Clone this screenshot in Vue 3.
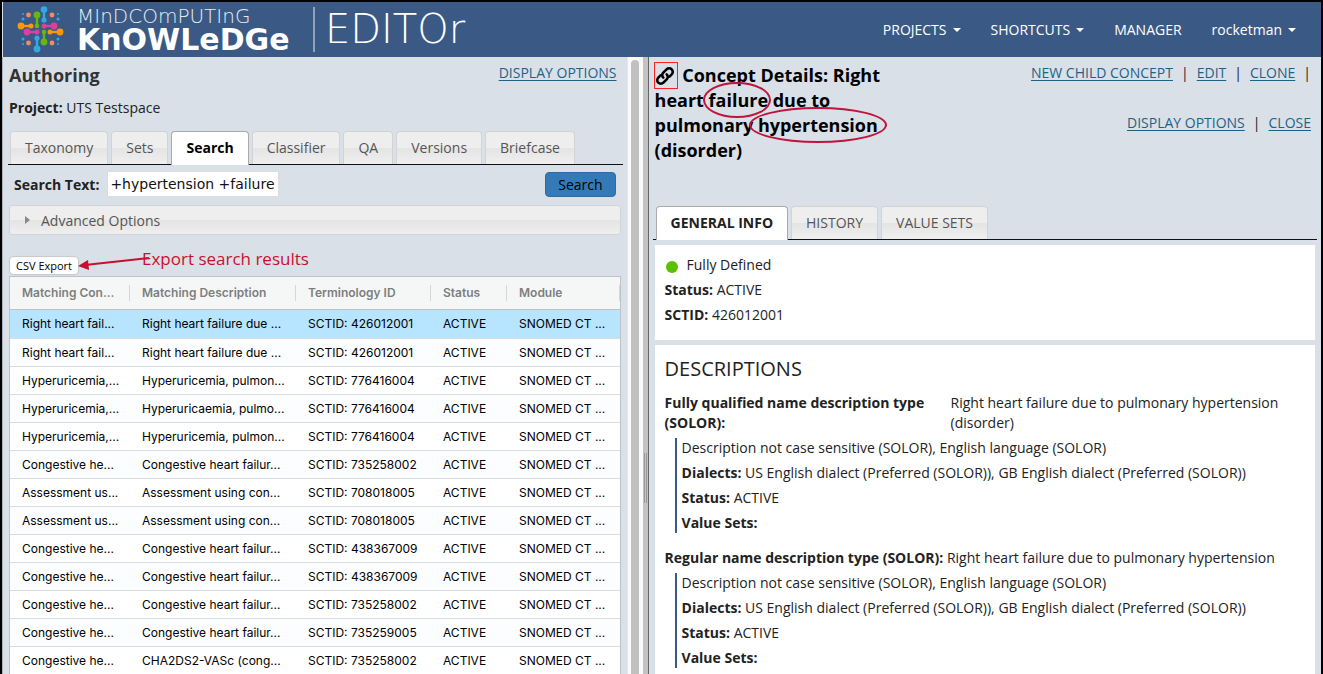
<script setup>
import { ref } from 'vue'

const nav = [
  { label: 'PROJECTS', menu: true },
  { label: 'SHORTCUTS', menu: true },
  { label: 'MANAGER', menu: false },
  { label: 'rocketman', menu: true },
]

const leftTabs = ['Taxonomy', 'Sets', 'Search', 'Classifier', 'QA', 'Versions', 'Briefcase']
const activeLeft = ref('Search')
const rightTabs = ['GENERAL INFO', 'HISTORY', 'VALUE SETS']
const activeRight = ref('GENERAL INFO')

const searchText = ref('+hypertension +failure')
const selected = ref(0)

const columns = ['Matching Con...', 'Matching Description', 'Terminology ID', 'Status', 'Module']
const rows = [
  ['Right heart fail...', 'Right heart failure due ...', '426012001'],
  ['Right heart fail...', 'Right heart failure due ...', '426012001'],
  ['Hyperuricemia,...', 'Hyperuricemia, pulmon...', '776416004'],
  ['Hyperuricemia,...', 'Hyperuricaemia, pulmo...', '776416004'],
  ['Hyperuricemia,...', 'Hyperuricemia, pulmon...', '776416004'],
  ['Congestive he...', 'Congestive heart failur...', '735258002'],
  ['Assessment us...', 'Assessment using con...', '708018005'],
  ['Assessment us...', 'Assessment using con...', '708018005'],
  ['Congestive he...', 'Congestive heart failur...', '438367009'],
  ['Congestive he...', 'Congestive heart failur...', '438367009'],
  ['Congestive he...', 'Congestive heart failur...', '735258002'],
  ['Congestive he...', 'Congestive heart failur...', '735259005'],
  ['Congestive he...', 'CHA2DS2-VASc (cong...', '735258002'],
]

const descriptions = [
  {
    type: 'Fully qualified name description type (SOLOR):',
    text: 'Right heart failure due to pulmonary hypertension (disorder)',
    split: true,
  },
  {
    type: 'Regular name description type (SOLOR):',
    text: 'Right heart failure due to pulmonary hypertension',
    split: false,
  },
]
</script>

<template>
  <div class="frame">
    <header class="topbar">
      <div class="brand">
        <svg class="mark" viewBox="0 0 48 48" aria-hidden="true">
          <g stroke-width="2.4" fill="none">
            <path d="M20 9v11" stroke="#65b80f" />
            <path d="M27 3v11" stroke="#35a8e0" />
            <path d="M4 20h10" stroke="#ff9800" />
            <path d="M27 20h10" stroke="#dd3f9f" />
            <path d="M10 26h11" stroke="#dd3f9f" />
            <path d="M33 26h11" stroke="#ff9800" />
            <path d="M20 32v11" stroke="#35a8e0" />
            <path d="M27 26v10" stroke="#65b80f" />
          </g>
          <g fill="#65b80f"><circle cx="20" cy="9" r="3.4" /><circle cx="20" cy="20" r="2.3" /><circle cx="27" cy="26" r="2.3" /><circle cx="27" cy="36" r="3.4" /></g>
          <g fill="#35a8e0">
            <circle cx="27" cy="3.5" r="3.3" /><circle cx="27" cy="14" r="2.6" /><circle cx="20" cy="32" r="2.6" /><circle cx="20" cy="43" r="3.4" />
            <circle cx="6" cy="8" r="1" /><circle cx="6" cy="13" r="1.5" /><circle cx="41" cy="8" r="1" /><circle cx="41" cy="13" r="1.5" />
            <circle cx="6" cy="33" r="1.5" /><circle cx="6" cy="38" r="1" /><circle cx="41" cy="33" r="1.5" /><circle cx="41" cy="38" r="1" />
          </g>
          <g fill="#ff9800"><circle cx="4" cy="20" r="3.4" /><circle cx="14" cy="20" r="2.5" /><circle cx="33" cy="26" r="2.5" /><circle cx="43" cy="26" r="3.4" /></g>
          <g fill="#dd3f9f"><circle cx="27" cy="20" r="2.5" /><circle cx="37" cy="20" r="3.4" /><circle cx="10" cy="26" r="3.4" /><circle cx="20" cy="26" r="2.5" /></g>
          <g fill="#f58a5c"><circle cx="11.500" cy="9" r="2.400" /><circle cx="35" cy="9" r="2.400" /><circle cx="11.500" cy="37" r="2.400" /><circle cx="35" cy="37" r="2.400" /></g>
        </svg>
        <div class="words">
          <span class="word-top">MInDCOmPUTInG</span>
          <span class="word-main">KnOWLeDGe</span>
        </div>
        <span class="product">EDITOr</span>
      </div>
      <nav class="nav">
        <a v-for="n in nav" :key="n.label" href="#">{{ n.label }}<i v-if="n.menu" class="caret"></i></a>
      </nav>
    </header>

    <main class="panes">
      <section class="left">
        <div class="left-content">
          <div class="left-head">
            <h1>Authoring</h1>
            <a class="link" href="#">DISPLAY OPTIONS</a>
          </div>
          <p class="project"><b>Project:</b> UTS Testspace</p>

          <div class="tabs left-tabs" role="tablist">
            <button v-for="t in leftTabs" :key="t" type="button" role="tab" :aria-selected="t === activeLeft"
              :class="{ active: t === activeLeft }" @click="activeLeft = t">{{ t }}</button>
          </div>

          <form class="search" @submit.prevent>
            <label for="search-text">Search Text:</label>
            <input id="search-text" v-model="searchText" type="text" />
            <button type="submit">Search</button>
          </form>

          <button class="advanced" type="button"><i class="tri"></i>Advanced Options</button>

          <div class="export">
            <button class="csv" type="button">CSV Export</button>
            <div class="note">
              <svg class="arrow" viewBox="0 0 74 16" aria-hidden="true">
                <path d="M8 10 72 3" stroke="#c8102e" stroke-width="2" />
                <path d="M1 11 11 5 12 15z" fill="#c8102e" />
              </svg>
              <span>Export search results</span>
            </div>
          </div>

          <table class="grid">
            <colgroup>
              <col class="c1" /><col class="c2" /><col class="c3" /><col class="c4" /><col class="c5" />
            </colgroup>
            <thead>
              <tr><th v-for="c in columns" :key="c" scope="col"><span>{{ c }}</span></th></tr>
            </thead>
            <tbody>
              <tr v-for="(r, i) in rows" :key="i" :class="{ selected: i === selected }" @click="selected = i">
                <td>{{ r[0] }}</td>
                <td>{{ r[1] }}</td>
                <td>SCTID: {{ r[2] }}</td>
                <td>ACTIVE</td>
                <td>SNOMED CT ...</td>
              </tr>
            </tbody>
          </table>
        </div>
        <div class="track"><div class="thumb"></div></div>
      </section>

      <div class="splitter"><i></i></div>

      <section class="right">
        <div class="right-head">
          <h2>
            <span class="chain"><svg viewBox="0 0 20 20" aria-hidden="true">
              <g fill="none" stroke="#000" stroke-width="2.6" stroke-linecap="round">
                <path d="M8.300 11.700a3.600 3.600 0 0 1 0-5.100l3.300-3.300a3.600 3.600 0 0 1 5.100 5.100l-2.200 2.200" />
                <path d="M11.700 8.300a3.600 3.600 0 0 1 0 5.100l-3.300 3.300a3.600 3.600 0 0 1-5.100-5.100l2.200-2.200" />
              </g>
            </svg></span>
            Concept Details: Right heart <span class="ring ring-a">failure</span> due to pulmonary
            <span class="ring ring-b">hypertension</span> (disorder)
          </h2>
          <div class="actions">
            <div><a class="link" href="#">NEW CHILD CONCEPT</a><span>|</span><a class="link" href="#">EDIT</a><span>|</span><a class="link" href="#">CLONE</a><span class="end">|</span></div>
            <div><a class="link" href="#">DISPLAY OPTIONS</a><span>|</span><a class="link" href="#">CLOSE</a></div>
          </div>
        </div>

        <div class="tabs right-tabs" role="tablist">
          <button v-for="t in rightTabs" :key="t" type="button" role="tab" :aria-selected="t === activeRight"
            :class="{ active: t === activeRight }" @click="activeRight = t">{{ t }}</button>
        </div>

        <div class="card summary">
          <p><i class="dot"></i>Fully Defined</p>
          <p><b>Status:</b> ACTIVE</p>
          <p><b>SCTID:</b> 426012001</p>
        </div>

        <div class="card details">
          <h3>DESCRIPTIONS</h3>
          <article v-for="d in descriptions" :key="d.type">
            <div class="desc-name" :class="{ split: d.split }"><b>{{ d.type }}</b> <span>{{ d.text }}</span></div>
            <div class="desc-body">
              <p>Description not case sensitive (SOLOR), English language (SOLOR)</p>
              <p><b>Dialects:</b> US English dialect (Preferred (SOLOR)), GB English dialect (Preferred (SOLOR))</p>
              <p><b>Status:</b> ACTIVE</p>
              <p><b>Value Sets:</b></p>
            </div>
          </article>
        </div>
      </section>
    </main>
  </div>
</template>

<style>
body {
  margin: 0;
  background: #d9e0e8;
}
</style>

<style scoped>
* {
  box-sizing: border-box;
}
.frame {
  display: flex;
  flex-direction: column;
  height: 100vh;
  overflow: hidden;
  border: 2px solid #000;
  border-bottom: 0;
  background: #d9e0e8;
  color: #222;
  font-family: "Open Sans", "Noto Sans", sans-serif;
  font-size: 14px;
  line-height: 25px;
}
h1, h2, h3, p {
  margin: 0;
}
button {
  font: inherit;
  cursor: pointer;
}
.link {
  color: #1f6286;
  text-decoration: underline;
  text-underline-offset: 2px;
}

/* top bar */
.topbar {
  flex: none;
  display: flex;
  align-items: center;
  justify-content: space-between;
  height: 55px;
  margin-left: 1px;
  background: #3a5a85;
  color: #fff;
}
.brand {
  display: flex;
  align-items: center;
  font-family: "DejaVu Sans", sans-serif;
}
.mark {
  width: 48px;
  height: 48px;
  margin: 0 12px 0 14px;
}
.words {
  display: flex;
  flex-direction: column;
  width: 236px;
}
.word-top {
  font-family: "DejaVu Sans Light", "DejaVu Sans", sans-serif;
  font-weight: 200;
  font-size: 20px;
  line-height: 20px;
  color: #e6ecf4;
}
.word-main {
  font-weight: bold;
  font-size: 30px;
  line-height: 28px;
}
.product {
  padding-left: 10px;
  border-left: 2px solid #91a3bb;
  font-family: "DejaVu Sans Light", "DejaVu Sans", sans-serif;
  font-weight: 200;
  font-size: 40px;
  line-height: 45px;
}
.nav {
  display: flex;
  gap: 30px;
  padding: 0 25px 0 0;
}
.nav a {
  color: #fff;
  text-decoration: none;
}
.caret {
  display: inline-block;
  margin-left: 6px;
  vertical-align: 3px;
  border: 4px solid transparent;
  border-top-color: #fff;
  border-bottom: 0;
}

/* panes */
.panes {
  flex: 1;
  display: flex;
  min-height: 0;
}
.left {
  flex: 642 1 0;
  display: flex;
  min-width: 0;
  border-left: 1px solid #aeb4bd;
}
.left-content {
  flex: 1;
  min-width: 0;
  padding: 6px 4px 0 5px;
  overflow: hidden;
}
.track {
  flex: none;
  width: 16px;
  padding: 3px 4px 0 3px;
  background: #fafafa;
  border-left: 1px solid #e6e6e6;
}
.thumb {
  width: 8px;
  height: 100%;
  border-radius: 4px 4px 0 0;
  background: #c1c1c1;
}
.splitter {
  flex: none;
  display: flex;
  align-items: flex-start;
  justify-content: center;
  width: 6px;
  background: #c3c3c3;
  border-right: 1px solid #666;
}
.splitter i {
  width: 3px;
  height: 50px;
  margin-top: 396px;
  border: 1px solid #999;
  border-width: 0 1px;
}
.right {
  flex: 667 1 0;
  min-width: 0;
  padding: 6px 4px 0;
  overflow: hidden;
}

/* left pane */
.left-head {
  display: flex;
  justify-content: space-between;
  align-items: center;
  height: 25px;
  padding: 0 6px 0 1px;
}
.left-head h1 {
  font-size: 18px;
  color: #333;
}
.left-head a {
  line-height: 20px;
  padding-bottom: 5px;
}
.project {
  padding: 7px 0 0 1px;
}
.tabs {
  display: flex;
  gap: 3px;
  border-bottom: 1px solid #111;
}
.tabs button {
  height: 33px;
  padding: 0 14px 2px;
  border: 1px solid #d3d3d3;
  border-bottom: 0;
  border-radius: 4px 4px 0 0;
  background: linear-gradient(#eee 0 50%, #e4e4e4 50%, #efefef);
  color: #555;
}
.tabs .active {
  height: 34px;
  margin-bottom: -1px;
  border-color: #aaa;
  background: #fff;
  color: #212121;
  font-weight: bold;
}
.left-tabs {
  margin-top: 11px;
  padding-left: 2px;
}
.left-tabs .active {
  color: #000;
}
.search {
  display: flex;
  align-items: center;
  gap: 8px;
  padding: 6px 7px 8px 6px;
}
.search label {
  font-weight: bold;
}
.search input {
  width: 172px;
  height: 26px;
  padding: 0 2px;
  border: 1px solid #ddd;
  background: #fff;
  color: #111;
  font: 14px "DejaVu Sans", sans-serif;
}
.search button {
  height: 25px;
  margin-left: auto;
  padding: 0 12px;
  border: 1px solid #2e6da4;
  border-radius: 4px;
  background: #337ab7;
  color: #000;
  line-height: 23px;
}
.advanced {
  display: flex;
  align-items: center;
  width: calc(100% - 3px);
  height: 30px;
  margin: 0 2px 22px 1px;
  padding: 0 15px;
  border: 1px solid #d3d3d3;
  border-radius: 3px;
  background: linear-gradient(#eee 0 50%, #e4e4e4 50%, #efefef);
  color: #555;
}
.tri {
  margin-right: 11px;
  border: 4px solid transparent;
  border-left: 5px solid #888;
  border-right: 0;
}
.export {
  display: flex;
  position: relative;
  height: 19px;
  padding-left: 2px;
}
.csv {
  height: 17px;
  padding: 0 6px;
  border: 0;
  border-radius: 4px;
  background: #fff;
  box-shadow: 0 0 1px 1px #c4c9d0;
  color: #000;
  font-size: 11px;
  line-height: 17px;
}
.note {
  position: absolute;
  left: 69px;
  top: -11px;
  color: #c8102e;
  font-family: "Open Sans", sans-serif;
  font-size: 17px;
  font-weight: 500;
  white-space: nowrap;
}
.arrow {
  position: absolute;
  left: 0;
  top: 9px;
  width: 74px;
  height: 16px;
}
.note span {
  margin-left: 65px;
}
.grid {
  width: calc(100% - 3px);
  margin-left: 1px;
  table-layout: fixed;
  border-collapse: separate;
  border-spacing: 0;
  border: 1px solid #bdc3c7;
  background: #fff;
  color: #000;
  font-family: Inter, sans-serif;
  font-size: 12px;
  line-height: 16px;
}
.c1 { width: 120px; }
.c2 { width: 166px; }
.c3 { width: 135px; }
.c4 { width: 76px; }
.c5 { width: auto; }
.grid th {
  height: 33px;
  padding: 0;
  border-bottom: 1px solid #bdc3c7;
  background: #f5f7f7;
  color: #7d7f7f;
  font-weight: 600;
  text-align: left;
}
.grid th span {
  display: block;
  padding-left: 12px;
  border-right: 1px solid #d3d8da;
  white-space: nowrap;
  overflow: hidden;
}
.grid td {
  height: 28px;
  padding: 0 0 0 12px;
  border-bottom: 1px solid #d9dcde;
  white-space: nowrap;
  overflow: hidden;
}
.grid tr:nth-child(even) td {
  background: #fcfdfe;
}
.grid .selected td {
  height: 29px;
  background: #b7e4ff;
}

/* right pane */
.right-head {
  display: flex;
  justify-content: space-between;
  height: 143px;
  padding: 0 6px 0 2px;
}
.right-head h2 {
  width: 245px;
  font-size: 18px;
  color: #000;
}
.chain {
  display: inline-block;
  width: 24px;
  height: 27px;
  margin: -4px 0 -4px -1px;
  border: 1px solid #f22;
  vertical-align: -3px;
}
.chain svg {
  display: block;
  width: 20px;
  height: 20px;
  margin-top: 3px;
}
.ring {
  position: relative;
}
.ring::after {
  content: "";
  position: absolute;
  border: 2px solid #c0143c;
  border-radius: 50%;
}
.ring-a::after {
  inset: -6px -3px -6px -6px;
}
.ring-b::after {
  inset: -6px -9px -6px -9px;
}
.actions {
  display: flex;
  flex-direction: column;
  gap: 25px;
  margin-top: -3px;
  text-align: right;
}
.actions span {
  margin: 0 8px;
}
.actions .end {
  margin-right: 0;
}
.right-tabs {
  padding-left: 3px;
}
.card {
  margin: 5px 2px 0;
  padding: 8px 10px;
  background: #fff;
}
.summary {
  height: 95px;
  padding-top: 7px;
}
.dot {
  display: inline-block;
  width: 12px;
  height: 12px;
  margin: 0 9px 0 1px;
  border-radius: 50%;
  background: #5cc000;
  vertical-align: -3px;
}
.details h3 {
  font-size: 20px;
  font-weight: normal;
  line-height: 32px;
}
.details article {
  padding: 8px 0 7px;
}
.desc-name {
  line-height: 20px;
}
.desc-name.split {
  display: flex;
  gap: 14px;
}
.split b {
  flex: 0 0 272px;
}
.desc-body {
  margin: 5px 0 0 10px;
  padding-left: 5px;
  border-left: 2px solid #3a5a85;
  line-height: 25px;
}
.desc-body p {
  height: 25px;
}
.desc-body p:first-child {
  height: 22px;
  line-height: 20px;
}
.desc-body p:last-child {
  height: 23px;
}
</style>
